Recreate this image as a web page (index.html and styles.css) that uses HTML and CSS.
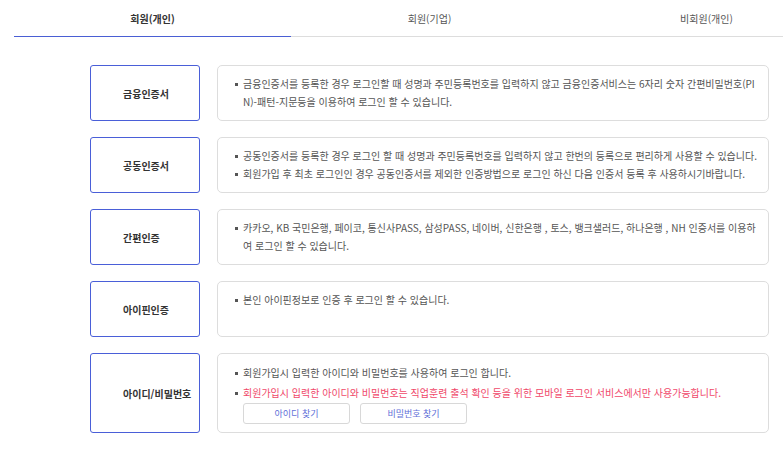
FILE: index.html
```html
<!DOCTYPE html>
<html lang="ko">
<head>
<meta charset="utf-8">
<link rel="stylesheet" href="styles.css">
</head>
<body>
<div class="tabs">
  <div class="tab active">회원(개인)</div>
  <div class="tab">회원(기업)</div>
  <div class="tab">비회원(개인)</div>
</div>
<div class="list">
  <div class="row">
    <div class="label">금융인증서</div>
    <div class="desc">
      <ul>
        <li>금융인증서를 등록한 경우 로그인할 때 성명과 주민등록번호를 입력하지 않고 금융인증서비스는 6자리 숫자 간편비밀번호(PIN)-패턴-지문등을 이용하여 로그인 할 수 있습니다.</li>
      </ul>
    </div>
  </div>
  <div class="row">
    <div class="label">공동인증서</div>
    <div class="desc">
      <ul>
        <li>공동인증서를 등록한 경우 로그인 할 때 성명과 주민등록번호를 입력하지 않고 한번의 등록으로 편리하게 사용할 수 있습니다.</li>
        <li>회원가입 후 최초 로그인인 경우 공동인증서를 제외한 인증방법으로 로그인 하신 다음 인증서 등록 후 사용하시기바랍니다.</li>
      </ul>
    </div>
  </div>
  <div class="row">
    <div class="label">간편인증</div>
    <div class="desc">
      <ul>
        <li>카카오, KB 국민은행, 페이코, 통신사PASS, 삼성PASS, 네이버, 신한은행 , 토스, 뱅크샐러드, 하나은행 , NH 인증서를 이용하여 로그인 할 수 있습니다.</li>
      </ul>
    </div>
  </div>
  <div class="row">
    <div class="label">아이핀인증</div>
    <div class="desc">
      <ul>
        <li>본인 아이핀정보로 인증 후 로그인 할 수 있습니다.</li>
      </ul>
    </div>
  </div>
  <div class="row tall">
    <div class="label">아이디/비밀번호</div>
    <div class="desc">
      <ul>
        <li>회원가입시 입력한 아이디와 비밀번호를 사용하여 로그인 합니다.</li>
        <li class="warn">회원가입시 입력한 아이디와 비밀번호는 직업훈련 출석 확인 등을 위한 모바일 로그인 서비스에서만 사용가능합니다.</li>
      </ul>
      <div class="btns">
        <button class="btn" type="button">아이디 찾기</button>
        <button class="btn" type="button">비밀번호 찾기</button>
      </div>
    </div>
  </div>
</div>
</body>
</html>
```
FILE: styles.css
```css
html, body {
  margin: 0;
  padding: 0;
  background: #fff;
  overflow: hidden;
}
body {
  font-family: "Noto Sans CJK KR", "Noto Sans", sans-serif;
  color: #555;
  width: 783px;
  height: 451px;
}
.tabs {
  display: flex;
  margin-left: 14px;
  width: 769px;
  overflow: hidden;
}
.tab {
  flex: 0 0 277px;
  height: 37px;
  box-sizing: border-box;
  padding-top: 11px;
  text-align: center;
  font-size: 10px;
  color: #555;
  border-bottom: 1px solid #ddd;
}
.tab.active {
  color: #333;
  font-weight: bold;
  border-bottom-color: #4a5fd4;
}
.list {
  margin: 28px 0 0 90px;
  width: 679px;
  display: flex;
  flex-direction: column;
  gap: 16px;
}
.row {
  display: flex;
  gap: 17px;
  height: 56px;
}
.row.tall {
  height: 80px;
}
.label {
  flex: 0 0 110px;
  box-sizing: border-box;
  border: 1px solid #4a5fd8;
  border-radius: 3px;
  display: flex;
  align-items: center;
  padding-left: 32px;
  font-size: 10px;
  font-weight: bold;
  color: #333;
}
.desc {
  flex: 1;
  box-sizing: border-box;
  border: 1px solid #ddd;
  border-radius: 5px;
  padding: 9px 10px 0 17px;
  font-size: 10px;
  line-height: 18px;
  color: #555;
}
.desc ul {
  margin: 0;
  padding: 0;
  list-style: none;
}
.desc li {
  position: relative;
  padding-left: 8px;
  word-break: break-all;
}
.desc li::before {
  content: "";
  position: absolute;
  left: 0;
  top: 8px;
  width: 3px;
  height: 3px;
  background: #555;
}
.tall .desc li {
  line-height: 20px;
}
.tall .desc li::before {
  top: 9px;
}
.desc li.warn {
  color: #f0486a;
}
.btns {
  display: flex;
  gap: 10px;
  padding-left: 8px;
}
.btn {
  width: 107px;
  height: 21px;
  box-sizing: border-box;
  border: 1px solid #d8d8d8;
  border-radius: 3px;
  background: #fff;
  font-family: inherit;
  font-size: 9px;
  color: #6170d8;
  padding: 0;
}
```
